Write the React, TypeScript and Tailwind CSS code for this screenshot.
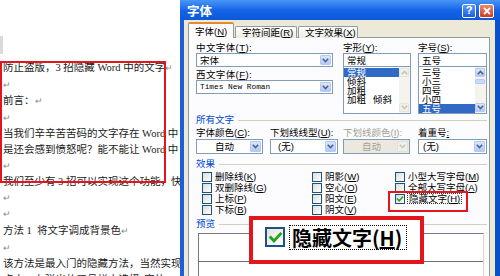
import React from "react";

const M = ({ k }: { k: string }) => (
  <>
    (<span className="underline underline-offset-1">{k}</span>)
  </>
);

function Chevron({ up, color }: { up?: boolean; color: string }) {
  return (
    <svg width="7" height="5" viewBox="0 0 7 5">
      <path
        d={up ? "M0.8 4.2 L3.5 1.4 L6.2 4.2" : "M0.8 0.8 L3.5 3.6 L6.2 0.8"}
        fill="none"
        stroke={color}
        strokeWidth="1.5"
      />
    </svg>
  );
}

function DropBtn({ disabled }: { disabled?: boolean }) {
  return (
    <div
      className={
        disabled
          ? "w-[11px] h-full rounded-[1px] flex items-center justify-center bg-[#f1f0e8] border border-[#e2e1d8]"
          : "w-[11px] h-full rounded-[1px] flex items-center justify-center bg-linear-to-b from-[#dbe5fd] to-[#b3c8f6] border border-[#b6c9f3]"
      }
    >
      <Chevron color={disabled ? "#c8c6b8" : "#4d6185"} />
    </div>
  );
}

function Combo({
  children,
  h,
  center,
  disabled,
  pl,
}: {
  children: React.ReactNode;
  h: string;
  center?: boolean;
  disabled?: boolean;
  pl?: string;
}) {
  return (
    <div
      className={`${h} border border-[#7f9db9] flex items-stretch ${
        disabled ? "bg-[#ebe9df] text-[#a3a192]" : "bg-white"
      }`}
    >
      <div
        className={`flex-1 flex items-center overflow-hidden whitespace-nowrap ${
          center ? "justify-center" : ""
        } ${pl ?? "pl-[3px]"}`}
      >
        {children}
      </div>
      <div className="p-[1px]">
        <DropBtn disabled={disabled} />
      </div>
    </div>
  );
}

function TextBox({ children }: { children: React.ReactNode }) {
  return (
    <div className="h-[14px] border border-[#7f9db9] bg-white flex items-center pl-[3px]">
      {children}
    </div>
  );
}

function ListBox({
  items,
  selected,
  active,
}: {
  items: React.ReactNode[];
  selected: number;
  active?: boolean;
}) {
  return (
    <div className="h-[47px] border border-[#7f9db9] border-t-0 bg-white flex">
      <div className="flex-1 pt-[1px] leading-[9px] text-[9.5px]">
        {items.map((it, i) => (
          <div
            key={i}
            className={
              i === selected
                ? "h-[9px] pl-[3px] bg-[#316ac5] text-white whitespace-nowrap overflow-hidden"
                : "h-[9px] pl-[3px] whitespace-nowrap overflow-hidden"
            }
          >
            {it}
          </div>
        ))}
      </div>
      <div className="w-[11px] bg-[#f4f3ee] flex flex-col justify-between py-[1px] pr-[1px]">
        <div
          className={
            active
              ? "h-[9px] rounded-[1px] bg-linear-to-b from-[#dbe5fd] to-[#b3c8f6] border border-[#b6c9f3] flex items-center justify-center"
              : "h-[9px] rounded-[1px] bg-[#f1f0e8] border border-[#e6e5dc] flex items-center justify-center"
          }
        >
          <Chevron up color={active ? "#4d6185" : "#c8c6b8"} />
        </div>
        {active && (
          <div className="h-[5px] -mt-[18px] rounded-[1px] bg-[#c9d8fb] border border-[#b6c9f3]" />
        )}
        <div
          className={
            active
              ? "h-[9px] rounded-[1px] bg-linear-to-b from-[#dbe5fd] to-[#b3c8f6] border border-[#b6c9f3] flex items-center justify-center"
              : "h-[9px] rounded-[1px] bg-[#f1f0e8] border border-[#e6e5dc] flex items-center justify-center"
          }
        >
          <Chevron color={active ? "#4d6185" : "#c8c6b8"} />
        </div>
      </div>
    </div>
  );
}

function Check({ size }: { size: number }) {
  return (
    <svg width={size} height={size} viewBox="0 0 10 10">
      <path
        d="M1.8 5 L4 7.3 L8.3 2.6"
        fill="none"
        stroke="#21a121"
        strokeWidth="1.9"
        strokeLinecap="square"
      />
    </svg>
  );
}

function CB({
  children,
  checked,
  focus,
}: {
  children: React.ReactNode;
  checked?: boolean;
  focus?: boolean;
}) {
  return (
    <div className="h-[11px] flex items-center">
      <div className="w-[10px] h-[10px] border border-[#1c5180] bg-linear-to-br from-[#dcdcd7] to-white flex items-center justify-center shrink-0">
        {checked && <Check size={8} />}
      </div>
      <span
        className={
          focus
            ? "ml-[2px] border border-dotted border-[#333] leading-[9px] px-[1px] whitespace-nowrap"
            : "ml-[3px] whitespace-nowrap"
        }
      >
        {children}
      </span>
    </div>
  );
}

function Heading({ children }: { children: React.ReactNode }) {
  return (
    <div className="h-[11px] flex items-center">
      <span className="text-[#0046d5] whitespace-nowrap">{children}</span>
      <div className="flex-1 h-px bg-[#d0d0bf] ml-[4px] mt-[2px]" />
    </div>
  );
}

const P = () => <span className="text-[#8c8c8c] text-[9px]">↵</span>;

export default function App() {
  return (
    <div className="relative w-[500px] h-[276px] overflow-hidden bg-white flex">
      {/* document */}
      <div className="w-[180px] shrink-0 relative overflow-hidden bg-white">
        <div className="absolute left-0 top-[36px] w-[3px] h-[18px] bg-[#dadada]" />
        <div className="pt-[60px] pl-[3px] font-['Liberation_Serif','Noto_Sans_CJK_SC',serif] text-[10.5px] leading-[15.6px] text-[#1b1b1b] whitespace-nowrap">
          <div>
            防止盗版，3 招隐藏 Word 中的文字<P />
          </div>
          <div><P /></div>
          <div>
            前言：<P />
          </div>
          <div><P /></div>
          <div>当我们辛辛苦苦码的文字存在 Word 中</div>
          <div>是还会感到愤怒呢？能不能让 Word 中</div>
          <div><P /></div>
          <div>我们至少有 3 招可以实现这个功能，快</div>
          <div><P /></div>
          <div><P /></div>
          <div>
            方法 1&nbsp; 将文字调成背景色<P />
          </div>
          <div><P /></div>
          <div>该方法是最入门的隐藏方法，当然实现</div>
          <div>点击，在弹出的工具栏中选择“字体”</div>
        </div>
        <div className="absolute left-0 top-[61px] w-[166px] h-[122px] border-2 border-[#e3161e]" />
      </div>

      {/* dialog */}
      <div className="w-[320px] shrink-0 flex flex-col bg-linear-to-r from-[#1d5fd9] via-[#0b55d6] to-[#0a50cc] font-['Liberation_Sans','Noto_Sans_CJK_SC',sans-serif] text-[9.5px] leading-[11px] text-black">
        {/* title bar */}
        <div className="h-[20px] shrink-0 flex items-center justify-between pl-[7px] pr-[6px] bg-linear-to-b from-[#4a95f7] via-[#1565e8] to-[#0c58d8]">
          <span className="text-white font-bold text-[12.5px] leading-[14px] font-['Noto_Sans_CJK_SC',sans-serif] mt-[1px]">
            字体
          </span>
          <div className="flex items-center mt-[1px]">
            <div className="w-[14px] h-[14px] rounded-[2px] border border-white bg-linear-to-b from-[#5b9bf8] to-[#1a5ee0] flex items-center justify-center text-white text-[11px] font-bold leading-none font-['Liberation_Sans',sans-serif]">
              ?
            </div>
            <div className="w-[15px] h-[14px] ml-[3px] rounded-[2px] border border-white bg-linear-to-b from-[#ea8a6a] to-[#cc3a1c] flex items-center justify-center">
              <svg width="8" height="8" viewBox="0 0 8 8">
                <path d="M1 1 L7 7 M7 1 L1 7" stroke="white" strokeWidth="1.8" />
              </svg>
            </div>
          </div>
        </div>

        {/* body */}
        <div className="flex-1 ml-[4px] mr-[5px] bg-[#ece9d8] pt-[2px] pl-[4px] pr-[5px] flex flex-col">
          {/* tabs */}
          <div className="h-[16px] flex items-end relative z-10 -mb-px">
            <div className="h-[16px] w-[46px] bg-[#fcfcfe] border border-[#919b9c] border-b-0 border-t-2 border-t-[#e68b2c] rounded-t-[2px] flex items-center pl-[6px] whitespace-nowrap">
              字体<M k="N" />
            </div>
            <div className="h-[12px] w-[62px] ml-[1px] bg-linear-to-b from-white to-[#ecebe5] border border-[#919b9c] border-b-0 rounded-t-[2px] flex items-center pl-[6px] whitespace-nowrap">
              字符间距<M k="R" />
            </div>
            <div className="h-[12px] w-[60px] ml-[1px] bg-linear-to-b from-white to-[#ecebe5] border border-[#919b9c] border-b-0 rounded-t-[2px] flex items-center pl-[6px] whitespace-nowrap overflow-hidden">
              文字效果<M k="X" />
            </div>
          </div>

          {/* panel */}
          <div className="flex-1 border border-[#919b9c] bg-[#fcfcfe] pl-[7px] pr-[2px] pt-[4px]">
            {/* top section */}
            <div className="flex">
              <div className="w-[137px]">
                <div className="h-[11px] whitespace-nowrap tracking-[0.4px]">
                  中文字体<M k="T" />:
                </div>
                <Combo h="h-[14px]">宋体</Combo>
                <div className="h-[11px] mt-[2px] whitespace-nowrap tracking-[0.4px]">
                  西文字体<M k="F" />:
                </div>
                <Combo h="h-[14px]">
                  <span className="font-['Liberation_Mono',monospace] text-[7.8px]">Times New Roman</span>
                </Combo>
              </div>
              <div className="w-[68px] ml-[10px]">
                <div className="h-[11px] whitespace-nowrap">
                  字形<M k="Y" />:
                </div>
                <TextBox>常规</TextBox>
                <ListBox
                  items={[
                    "常规",
                    "倾斜",
                    "加粗",
                    <>
                      加粗<span className="inline-block w-[7px]" />倾斜
                    </>,
                  ]}
                  selected={0}
                />
              </div>
              <div className="w-[69px] ml-[7px]">
                <div className="h-[11px] whitespace-nowrap">
                  字号<M k="S" />:
                </div>
                <TextBox>五号</TextBox>
                <ListBox items={["三号", "小三", "四号", "小四", "五号"]} selected={4} active />
              </div>
            </div>

            {/* all text */}
            <Heading>所有文字</Heading>
            <div className="flex mt-[2px] h-[11px] whitespace-nowrap">
              <div className="w-[67px]">
                字体颜色<M k="C" />:
              </div>
              <div className="w-[68px] ml-[7px]">
                下划线线型<M k="U" />:
              </div>
              <div className="w-[67px] ml-[5px] text-[#a3a192]">
                下划线颜色<M k="I" />:
              </div>
              <div className="w-[69px] ml-[8px]">
                着重号<span className="underline">:</span>
              </div>
            </div>
            <div className="flex mt-[1px]">
              <div className="w-[67px]">
                <Combo h="h-[15px]" center>
                  自动
                </Combo>
              </div>
              <div className="w-[68px] ml-[7px]">
                <Combo h="h-[15px]" pl="pl-[7px]">
                  (无)
                </Combo>
              </div>
              <div className="w-[67px] ml-[5px]">
                <Combo h="h-[15px]" center disabled>
                  自动
                </Combo>
              </div>
              <div className="w-[69px] ml-[8px]">
                <Combo h="h-[15px]" pl="pl-[4px]">
                  (无)
                </Combo>
              </div>
            </div>

            {/* effects */}
            <div className="mt-[4px]">
              <Heading>效果</Heading>
            </div>
            <div className="mt-[2px] pl-[6px] grid grid-cols-[110px_83px_1fr]">
              <div>
                <CB>删除线<M k="K" /></CB>
                <CB>双删除线<M k="G" /></CB>
                <CB>上标<M k="P" /></CB>
                <CB>下标<M k="B" /></CB>
              </div>
              <div>
                <CB>阴影<M k="W" /></CB>
                <CB>空心<M k="O" /></CB>
                <CB>阳文<M k="E" /></CB>
                <CB>阴文<M k="V" /></CB>
              </div>
              <div>
                <CB>小型大写字母<M k="M" /></CB>
                <CB>全部大写字母<M k="A" /></CB>
                <CB checked focus>
                  隐藏文字<M k="H" />
                </CB>
              </div>
            </div>

            {/* preview */}
            <div className="mt-[3px]">
              <Heading>预览</Heading>
            </div>
            <div className="mt-[4px] ml-[2px] w-[286px] h-[50px] bg-white border-t border-l border-[#7a7a7a] border-r border-r-[#d8d6c8] pt-[27px]">
              <div className="h-px bg-[#6f6f6f]" />
            </div>
          </div>
        </div>
      </div>

      {/* annotations */}
      <div className="absolute left-[388px] top-[191px] w-[80px] h-[21px] border-2 border-[#e3161e]" />
      <div className="absolute left-[249px] top-[216px] w-[175px] h-[48px] border-4 border-[#e3161e] bg-white flex items-start pl-[12px] pt-[5px]">
        <div className="mt-[2px] w-[20px] h-[20px] border-2 border-[#1c5180] bg-linear-to-br from-[#e4e4df] to-white flex items-center justify-center shrink-0">
          <Check size={15} />
        </div>
        <div className="ml-[4px] h-[25px] w-[118px] border border-dotted border-black flex items-center pl-[2px] whitespace-nowrap font-['Noto_Sans_CJK_SC',sans-serif] font-bold text-[20px] leading-[22px] text-black">
          隐藏文字<span className="font-bold">(<span className="underline">H</span>)</span>
        </div>
      </div>
    </div>
  );
}
